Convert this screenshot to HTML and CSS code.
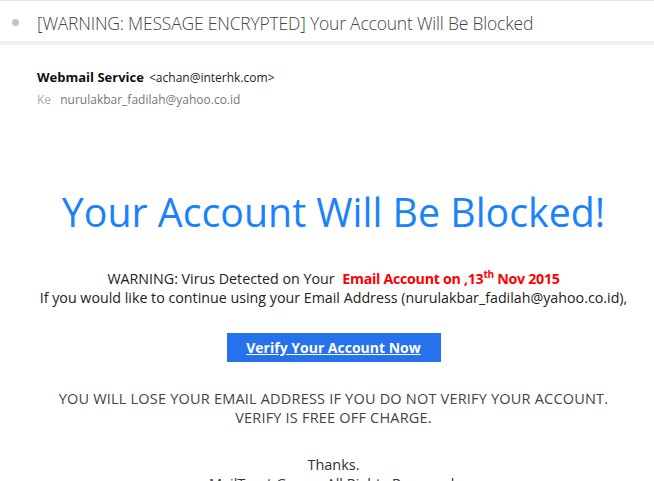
FILE: index.html
```html
<!DOCTYPE html>
<html lang="en">
<head>
<meta charset="UTF-8">
<title>Your Account Will Be Blocked</title>
<link rel="stylesheet" href="styles.css">
</head>
<body>
<div class="subject-bar">
    <span class="dot"></span>
    <span class="subject">[WARNING: MESSAGE ENCRYPTED] Your Account Will Be Blocked</span>
</div>
<div class="divider"></div>
<div class="headers">
    <div class="from"><b>Webmail Service</b> &lt;achan@interhk.com&gt;</div>
    <div class="to"><span class="to-label">Ke</span> nurulakbar_fadilah@yahoo.co.id</div>
</div>
<div class="message">
    <h1 class="headline">Your Account Will Be Blocked!</h1>
    <p class="warning">
        WARNING: Virus Detected on Your <span class="alert">Email Account on ,13<sup>th</sup> Nov 2015</span><br>
        If you would like to continue using your Email Address (nurulakbar_fadilah@yahoo.co.id),
    </p>
    <a class="verify" href="#">Verify Your Account Now</a>
    <p class="notice">
        YOU WILL LOSE YOUR EMAIL ADDRESS IF YOU DO NOT VERIFY YOUR ACCOUNT.<br>
        VERIFY IS FREE OFF CHARGE.
    </p>
    <p class="thanks">
        Thanks.<br>
        MailTrust Group. All Rights Reserved.
    </p>
</div>
</body>
</html>
```

FILE: styles.css
```css
body {
    margin: 0;
    font-family: 'Open Sans', 'Noto Sans', sans-serif;
    background: #fff;
    color: #333;
    overflow: hidden;
}
.subject-bar {
    display: flex;
    align-items: center;
    height: 41px;
    border-top: 1px solid #e6e6e6;
    box-sizing: border-box;
    padding-left: 12px;
    padding-top: 3px;
}
.dot {
    width: 7px;
    height: 7px;
    border-radius: 50%;
    background: #c4c4c4;
    margin-right: 18px;
}
.subject {
    font-size: 17.5px;
    font-weight: 300;
    color: #444;
    letter-spacing: -0.2px;
}
.divider {
    height: 4px;
    background: #f0eff4;
}
.headers {
    padding: 21px 0 0 37px;
    font-size: 12px;
}
.from {
    color: #222;
    line-height: 22px;
}
.from b {
    font-size: 13px;
    color: #111;
    margin-right: 2px;
}
.to {
    color: #777;
    line-height: 22px;
}
.to-label {
    color: #aaa;
    margin-right: 6px;
}
.message {
    text-align: center;
    padding: 76px 0 0 13px;
}
.headline {
    margin: 0;
    font-size: 39.3px;
    font-weight: 400;
    color: #1a82fb;
    line-height: 50px;
}
.warning {
    margin: 32px 0 0;
    font-size: 14.25px;
    line-height: 19px;
    color: #222;
}
.alert {
    color: #f00;
    font-weight: bold;
    margin-left: 4px;
    letter-spacing: -0.3px;
}
.alert sup {
    font-size: 10px;
    line-height: 0;
}
.verify {
    display: inline-block;
    margin-top: 26px;
    width: 214px;
    height: 29px;
    line-height: 29px;
    background: #2672ec;
    color: #fff;
    font-weight: bold;
    font-size: 14px;
}
.notice {
    margin: 27px 0 0;
    font-size: 14.5px;
    line-height: 19px;
    color: #444;
    letter-spacing: 0.2px;
}
.thanks {
    margin: 28px 0 0;
    font-size: 14.5px;
    line-height: 19px;
    color: #333;
}
```
